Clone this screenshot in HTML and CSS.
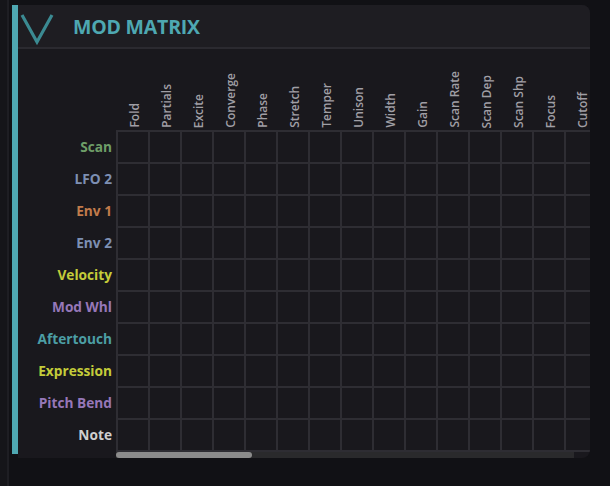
FILE: index.html
```html
<!DOCTYPE html>
<html lang="en">

<head>
    <meta charset="UTF-8">
    <meta name="viewport" content="width=device-width, initial-scale=1.0">
    <title>Mod Matrix</title>
    <link rel="stylesheet" href="styles.css">
</head>

<body>

    <div class="app">
        <div class="rail"></div>

        <div class="panel">
            <div class="accent"></div>
            <div class="panel-main">
                <div class="panel-head">
                    <svg class="chevron" width="40" height="42" viewBox="0 0 40 42">
                        <path d="M4 10 L19 37 L34 10" fill="none" stroke="#3b8a92" stroke-width="3.2" />
                    </svg>
                    <h1>MOD MATRIX</h1>
                </div>

                <div class="matrix">
                    <div class="sources">
                        <div class="sources-spacer"></div>
                        <div class="source scan">Scan</div>
                        <div class="source lfo">LFO 2</div>
                        <div class="source env1">Env 1</div>
                        <div class="source env2">Env 2</div>
                        <div class="source velocity">Velocity</div>
                        <div class="source modwhl">Mod Whl</div>
                        <div class="source aftertouch">Aftertouch</div>
                        <div class="source expression">Expression</div>
                        <div class="source pitchbend">Pitch Bend</div>
                        <div class="source note">Note</div>
                    </div>

                    <div class="grid-scroll" id="grid-scroll">
                        <div class="grid" id="grid">
                            <div class="dest-row" id="dest-row"></div>
                            <!-- cell rows are added by the script below -->
                        </div>
                    </div>
                </div>

                <div class="hscroll">
                    <div class="hscroll-thumb" id="thumb"></div>
                </div>
            </div>
        </div>
    </div>

    <script>
        const destinations = [
            "Fold", "Partials", "Excite", "Converge", "Phase", "Stretch", "Temper", "Unison",
            "Width", "Gain", "Scan Rate", "Scan Dep", "Scan Shp", "Focus", "Cutoff", "Reso",
            "Drive", "Flt Env", "Flt Mix", "Pan", "Volume", "Spread", "Detune", "Pitch",
            "Fine", "Glide", "Atk 1", "Dec 1", "Sus 1", "Rel 1", "Atk 2", "Dec 2",
            "Sus 2", "Rel 2", "LFO Rate", "LFO Dep", "LFO Shp", "Chorus", "Ch Rate", "Ch Dep",
            "Delay", "Dly Time", "Dly Fb", "Reverb", "Rev Size", "Rev Damp", "Rev Mix", "Comp",
            "Sat", "Tilt"
        ];
        const sourceCount = 10;

        const grid = document.getElementById("grid");
        const destRow = document.getElementById("dest-row");

        destinations.forEach(name => {
            const head = document.createElement("div");
            head.className = "dest";
            const label = document.createElement("span");
            label.textContent = name;
            head.appendChild(label);
            destRow.appendChild(head);
        });

        for (let r = 0; r < sourceCount; r++) {
            const row = document.createElement("div");
            row.className = "cell-row";
            destinations.forEach(() => {
                const cell = document.createElement("div");
                cell.className = "cell";
                row.appendChild(cell);
            });
            grid.appendChild(row);
        }

        // Size the scrollbar thumb from visible width / content width
        const scroller = document.getElementById("grid-scroll");
        const thumb = document.getElementById("thumb");
        const track = thumb.parentElement;
        const ratio = scroller.clientWidth / scroller.scrollWidth;
        thumb.style.width = Math.round(track.clientWidth * ratio) + "px";
    </script>
</body>

</html>
```

FILE: styles.css
```css
body {
    font-family: "Open Sans", "Noto Sans", sans-serif;
    background-color: #111115;
    margin: 0;
    padding: 0;
    overflow: hidden;
}

.app {
    display: flex;
    width: 610px;
    height: 486px;
    overflow: hidden;
}

.rail {
    width: 7px;
    background-color: #151519;
    border-right: 2px solid #1e1e23;
    margin-right: 3px;
    flex: none;
}

.panel {
    display: flex;
    flex: none;
    width: 578px;
    height: 453px;
    margin-top: 5px;
    overflow: hidden;
}

.accent {
    width: 6px;
    height: 449px;
    background-color: #4fa8b2;
    flex: none;
}

.panel-main {
    width: 572px;
    flex: none;
    display: flex;
    flex-direction: column;
    background-color: #19181d;
    border-radius: 0 8px 8px 0;
    overflow: hidden;
}

.panel-head {
    height: 42px;
    display: flex;
    align-items: center;
    background-color: #1e1d22;
    border-bottom: 2px solid #2b2a30;
    flex: none;
}

.chevron {
    display: block;
    flex: none;
}

.panel-head h1 {
    margin: 0 0 0 15px;
    font-size: 19.5px;
    font-weight: 700;
    color: #4ea8b2;
    letter-spacing: -0.2px;
}

.matrix {
    display: flex;
    height: 403px;
    flex: none;
    overflow: hidden;
}

.sources {
    width: 98px;
    flex: none;
    padding-right: 4px;
    box-sizing: border-box;
}

.sources-spacer {
    height: 83px;
}

.source {
    height: 32px;
    line-height: 30px;
    text-align: right;
    font-size: 13.7px;
    font-weight: 700;
    white-space: nowrap;
}

.scan { color: #6e9e68; }
.lfo { color: #7d8fb3; }
.env1 { color: #c27b4b; }
.env2 { color: #7d8fb3; }
.velocity { color: #c4cc3a; }
.modwhl { color: #9677b8; }
.aftertouch { color: #4c9ea5; }
.expression { color: #c4cc3a; }
.pitchbend { color: #9677b8; }
.note { color: #cfcfcf; }

.grid-scroll {
    width: 474px;
    flex: none;
    overflow: hidden;
}

.grid {
    display: inline-block;
}

.dest-row {
    display: flex;
    height: 81px;
    padding-left: 2px;
}

.dest {
    width: 32px;
    flex: none;
    display: flex;
    justify-content: center;
    align-items: flex-end;
    padding-bottom: 2px;
    box-sizing: border-box;
}

.dest span {
    writing-mode: vertical-rl;
    transform: rotate(180deg);
    font-size: 12px;
    font-weight: 600;
    color: #a09fa5;
    white-space: nowrap;
}

.cell-row {
    display: flex;
    border-left: 2px solid #2e2d33;
}

.dest-row + .cell-row {
    border-top: 2px solid #2e2d33;
}

.cell {
    width: 32px;
    height: 32px;
    flex: none;
    border-right: 2px solid #2e2d33;
    border-bottom: 2px solid #2e2d33;
    box-sizing: border-box;
}

.hscroll {
    height: 6px;
    margin: 0 16px 0 98px;
    background-color: #2a2a2c;
    flex: none;
}

.hscroll-thumb {
    height: 6px;
    width: 134px;
    background-color: #8c8c8c;
    border-radius: 3px;
}
```
